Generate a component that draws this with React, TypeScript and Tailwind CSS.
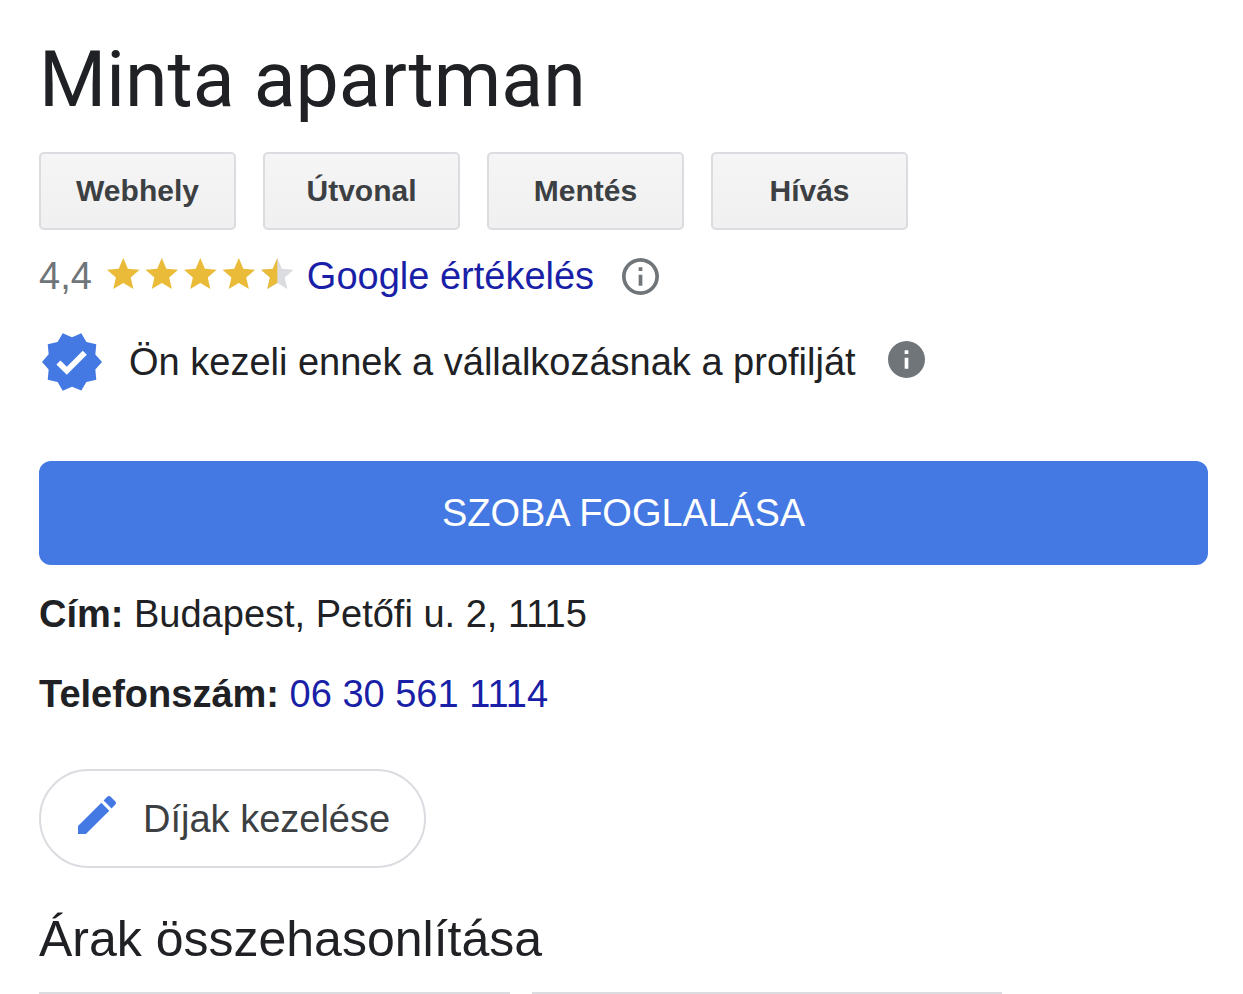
const STAR = 'M12 17.27L18.18 21l-1.64-7.03L22 9.24l-7.19-.61L12 2 9.19 8.63 2 9.24l5.46 4.73L5.82 21z';

function Stars() {
  return (
    <svg viewBox="0 0 187 31" className="mb-1.5 ml-[15px] h-[31px] w-[187px] shrink-0" role="img" aria-label="4,4 / 5">
      <defs>
        <clipPath id="half">
          <rect x="2" y="2" width="10" height="19" />
        </clipPath>
      </defs>
      {[0, 1, 2, 3].map((i) => (
        <path key={i} d={STAR} fill="#e9bb38" transform={`translate(${i * 38.5} 0) scale(1.63) translate(-2 -2)`} />
      ))}
      <g transform="translate(154 0) scale(1.63) translate(-2 -2)">
        <path d={STAR} fill="#dadce0" />
        <path d={STAR} fill="#e9bb38" clipPath="url(#half)" />
      </g>
    </svg>
  );
}

const actions = ['Webhely', 'Útvonal', 'Mentés', 'Hívás'];

export default function App() {
  return (
    <main className="bg-white pt-9 pr-[35px] pl-[39px] font-['Liberation_Sans',Arial,sans-serif] text-[38px] leading-[48px] text-[#202124]">
      <h1 className="font-['Roboto',sans-serif] text-[77px] leading-[88px]">Minta apartman</h1>

      <div className="mt-7 flex flex-wrap gap-[27px]">
        {actions.map((label) => (
          <button
            key={label}
            type="button"
            className="h-[78px] w-[197px] rounded-[5px] border-2 border-[#dadce0] bg-linear-to-b from-[#f5f5f5] to-[#f0f0f0] text-[30px] leading-9 font-bold text-[#3c4043]"
          >
            {label}
          </button>
        ))}
      </div>

      <div className="mt-[22px] flex items-center">
        <span className="text-[#70757a]">4,4</span>
        <Stars />
        <a href="#ertekelesek" className="ml-[13px] text-[#1a1fa8]">
          Google értékelés
        </a>
        <button type="button" aria-label="Információ az értékelésekről" className="ml-7">
          <svg viewBox="2 2 20 20" className="size-[37px] fill-[#70757a]">
            <path d="M11 7h2v2h-2zm0 4h2v6h-2zm1-9C6.48 2 2 6.48 2 12s4.48 10 10 10 10-4.48 10-10S17.52 2 12 2zm0 18c-4.41 0-8-3.59-8-8s3.59-8 8-8 8 3.59 8 8-3.59 8-8 8z" />
          </svg>
        </button>
      </div>

      <div className="mt-8 flex h-[60px] items-center">
        <svg viewBox="1 1 22 22" className="ml-[3px] size-[60px] shrink-0 fill-[#4479e3]" aria-hidden="true">
          <path d="M23 12l-2.44-2.79.34-3.69-3.61-.82-1.89-3.2L12 2.96 8.6 1.5 6.71 4.69 3.1 5.5l.34 3.7L1 12l2.44 2.79-.34 3.7 3.61.82L8.6 22.5l3.4-1.47 3.4 1.46 1.89-3.19 3.61-.82-.34-3.69L23 12zm-12.91 4.72l-3.8-3.81 1.48-1.48 2.32 2.33 5.85-5.87 1.48 1.48-7.33 7.35z" />
        </svg>
        <p className="ml-[27px]">Ön kezeli ennek a vállalkozásnak a profilját</p>
        <button type="button" aria-label="Információ a profilról" className="mb-1.5 ml-8">
          <svg viewBox="2 2 20 20" className="size-[37px] fill-[#70757a]">
            <path d="M12 2C6.48 2 2 6.48 2 12s4.48 10 10 10 10-4.48 10-10S17.52 2 12 2zm1 15h-2v-6h2v6zm0-8h-2V7h2v2z" />
          </svg>
        </button>
      </div>

      <button type="button" className="mt-[69px] block h-[104px] w-full rounded-[12px] bg-[#4479e3] text-white">
        SZOBA FOGLALÁSA
      </button>

      <p className="mt-[25px]">
        <strong>Cím:</strong> Budapest, Petőfi u. 2, 1115
      </p>
      <p className="mt-8">
        <strong>Telefonszám:</strong>{' '}
        <a href="tel:+36305611114" className="text-[#1a1fa8]">
          06 30 561 1114
        </a>
      </p>

      <button
        type="button"
        className="mt-[51px] flex h-[99px] items-center rounded-full border-2 border-[#dadce0] pr-[34px] pl-[37px] text-[#3c4043]"
      >
        <svg viewBox="3 3 18 18" className="mb-2 size-[38px] fill-[#4479e3]" aria-hidden="true">
          <path d="M3 17.25V21h3.75L17.81 9.94l-3.75-3.75L3 17.25zM20.71 7.04c.39-.39.39-1.02 0-1.41l-2.34-2.34c-.39-.39-1.02-.39-1.41 0l-1.83 1.83 3.75 3.75 1.83-1.83z" />
        </svg>
        <span className="ml-[27px]">Díjak kezelése</span>
      </button>

      <h2 className="mt-[43px] text-[50px] leading-[56px]">Árak összehasonlítása</h2>
      <div className="mt-[25px] grid w-[82.4%] grid-cols-2 gap-[22px]">
        <div className="border-t-2 border-[#dadce0]" />
        <div className="border-t-2 border-[#dadce0]" />
      </div>
    </main>
  );
}
